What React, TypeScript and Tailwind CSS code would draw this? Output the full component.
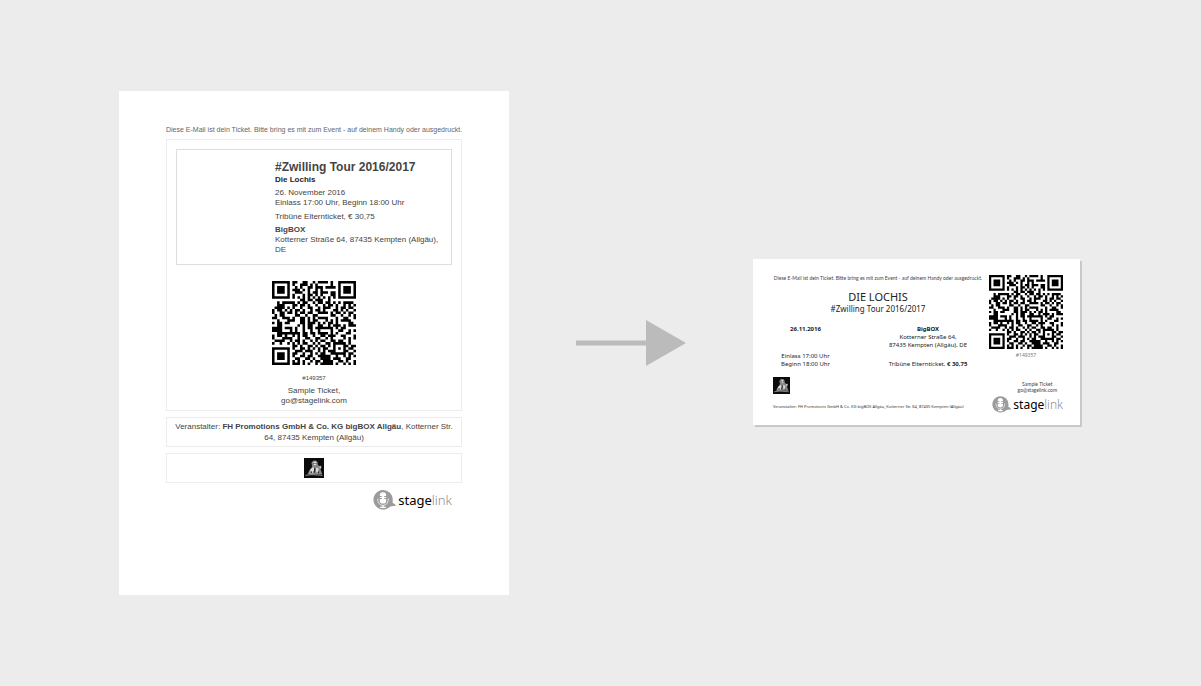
import React from "react";

const QR_ROWS = [
  "#######.##..##..#.####.#..#######",
  "#.....#.#..###.#.#.....#..#.....#",
  "#.###.#..#.#..##.###.####.#.###.#",
  "#.###.#.###.#.#..#.#......#.###.#",
  "#.###.#..###..#.##.###.##.#.###.#",
  "#.....#.#...#.##.#.#...##.#.....#",
  "#######.#.#.#.#.#.#.#.#.#.#######",
  "...........##.##.###..#..........",
  "..#.#####.#.##..#.##.##.#.#.####.",
  "..###...##.##.#..#..#.##.#..#.#.#",
  ".####.#.#..#..##..#.###..#.##.##.",
  "#.##.#.#.##.#..#.##.#...##.#.#..#",
  "#..##.##.#.##.##..####.#.##.#.##.",
  ".#.##....##..#..##.....##..#..#.#",
  "##..###.#..##.#.#.####...#..##..#",
  "..#...###..##.#.##...#.#.#.####..",
  "#.##.##....##.###.#.#.##.#....##.",
  "..##......#.#.##..##..#.###.#.###",
  "####.###.#..#.##.#######.#.##....",
  "####...#.#..#..#..#....#..##..#.#",
  "..#########.##.##.####.#.#...##..",
  "#.##.#..#.#.##..#..##.###..##...#",
  "#...####..#..##..##..#.#....#.#.#",
  ".####..#.##.#..#.#.##..##.##..#..",
  "#..#..#.#.#.##..#.#..##.#####.#..",
  "........##.#..##.#.##.#.#...##.##",
  "#######.#..##.#.#.#.##..#.#.#.##.",
  "#.....#..###.###..#.#.###...##..#",
  "#.###.#.##..#..#.#.##..######.##.",
  "#.###.#.#..##.##..#####..#..#.#.#",
  "#.###.#..##..##.#..####.###..##..",
  "#.....#.#.#.#..#.##.####..##.#..#",
  "#######.###.#.#..#.#####.#..#.#.#",
];

const QR_PATH = QR_ROWS.map((row, y) =>
  Array.from(row.matchAll(/#+/g), (run) => `M${run.index} ${y}h${run[0].length}v1h-${run[0].length}z`).join(""),
).join("");

function QrCode({ className }: { className: string }) {
  return (
    <svg viewBox="0 0 33 33" className={className} role="img" aria-label="QR code">
      <path d={QR_PATH} fill="#000" />
    </svg>
  );
}

function Portrait({ className }: { className: string }) {
  return (
    <svg viewBox="0 0 20 20" className={className} role="img" aria-label="Promoter">
      <rect width="20" height="20" fill="#0b0b0b" />
      <path d="M7.800 4C9 2 12.500 1.800 13.500 4l.4 2.600 1.400 1.600 1.800-.6.4 2.200-1 1.600 1.800 4.800H3.600l1.800-4 2.200-2.400.6-2.400-.8-1.600Z" fill="#858585" />
      <path d="M9 4.600 11 3.400l1.700.9-.6 2.400-1.800.7ZM6.600 11l2.900-2 1 2.600-2.200 4H5.400ZM12 9.400l2.400 1 .3 4.400-2.600-.6ZM15.300 8.600l1.400-.4.2 1.600-1 .8Z" fill="#dcdcdc" />
      <path d="M9.300 5.200h1.300v.9H9.300ZM11.400 5h1.100v.8h-1.100ZM10.400 9.500l1.100 1.200-.8 4.200-1-.7ZM6.800 13l1.300.7-.5 1.600H6.400ZM14 12l1.200 3h-1.400Z" fill="#222" />
      <path d="M1.500 17.300 8 16.600l10.500.7" stroke="#b5b5b5" strokeWidth=".8" fill="none" />
    </svg>
  );
}

function Stagelink({ small = false }: { small?: boolean }) {
  return (
    <div className="flex items-center gap-px">
      <svg viewBox="0 0 24 20" className={small ? "h-[17px] w-5" : "h-5 w-6"} aria-hidden="true">
        <path d="M10 0a9.8 9.8 0 0 1 9.8 9.8c0 1 0 1.900-.4 2.700l4.100 3.100-6.100.9A9.800 9.800 0 1 1 10 0Z" fill="#9b9b9b" />
        <path d="M6.800 5.400a3.200 3.200 0 0 1 6.400 0v.6h-2v.9h2v1.200h-2V9h2v1.400a3.200 3.200 0 0 1-6.400 0V9h2v-.9h-2V6.900h2V6h-2Z" fill="#fff" />
        <path d="M4.800 8.600v1.600a5.200 5.200 0 0 0 10.400 0V8.600" stroke="#e4e4e4" strokeWidth="1" fill="none" />
        <path d="M10 15.200v2M7.200 17.300h5.600" stroke="#fff" strokeWidth="1.300" fill="none" />
      </svg>
      <span
        className={
          small
            ? "font-['Noto_Sans',sans-serif] text-[12px] leading-4 text-black"
            : "font-['Noto_Sans',sans-serif] text-[13px] leading-5 text-black"
        }
      >
        stage<span className="font-light text-[#8c8c8c]">link</span>
      </span>
    </div>
  );
}

function MailTicket() {
  return (
    <article className="flex min-h-[504px] w-[390px] shrink-0 flex-col bg-white px-[47px] pt-[34px] font-['Liberation_Sans',Arial,sans-serif] text-[8px] leading-[10px] text-[#444]">
      <p className="text-center text-[7px] whitespace-nowrap text-[#666]">
        Diese E-Mail ist dein Ticket. Bitte bring es mit zum Event - auf deinem Handy oder ausgedruckt.
      </p>
      <section className="mt-1 border border-[#ececec] px-[9px] pt-[9px] pb-1">
        <div className="border border-[#dedede] py-[9px] pr-3 pl-[98px]">
          <h1 className="text-[12px] leading-4 font-bold">#Zwilling Tour 2016/2017</h1>
          <p className="font-bold text-[#222]">Die Lochis</p>
          <p className="mt-[3px]">
            26. November 2016
            <br />
            Einlass 17:00 Uhr, Beginn 18:00 Uhr
          </p>
          <p className="mt-1">Tribüne Elternticket, € 30,75</p>
          <p className="mt-[3px]">
            <strong>BigBOX</strong>
            <br />
            Kotterner Straße 64, 87435 Kempten (Allgäu), DE
          </p>
        </div>
        <div className="mt-4 flex flex-col items-center text-center">
          <QrCode className="size-[84px]" />
          <p className="mt-2 text-[6px]">#149357</p>
          <p className="mt-[3px]">
            Sample Ticket,
            <br />
            go@stagelink.com
          </p>
        </div>
      </section>
      <section className="mt-1.5 border border-[#ececec] px-2 py-[3px] text-center leading-[11px]">
        Veranstalter: <strong>FH Promotions GmbH &amp; Co. KG bigBOX Allgäu</strong>, Kotterner Str. 64, 87435 Kempten
        (Allgäu)
      </section>
      <section className="mt-1.5 flex justify-center border border-[#ececec] py-1">
        <Portrait className="size-5" />
      </section>
      <div className="mt-[7px] flex justify-end pr-2.5">
        <Stagelink />
      </div>
    </article>
  );
}

function Arrow() {
  return (
    <svg viewBox="0 0 110 46" className="h-[46px] w-[110px] shrink-0" aria-hidden="true">
      <path d="M0 20.500h70V0l40 23-40 23V25.500H0Z" fill="#bbb" />
    </svg>
  );
}

function WalletTicket() {
  return (
    <article className="mb-0.5 flex min-h-[166px] w-[327px] shrink-0 justify-between bg-white pt-4 pr-[17px] pb-3 pl-5 font-['Noto_Sans',sans-serif] text-[6px] leading-2 text-[#222] shadow-[2px_2px_0_#c8c8c8]">
      <div className="flex w-[210px] flex-col">
        <p className="text-center font-['Lato',sans-serif] text-[5px] leading-[6px] whitespace-nowrap text-[#444]">
          Diese E-Mail ist dein Ticket. Bitte bring es mit zum Event - auf deinem Handy oder ausgedruckt.
        </p>
        <h2 className="mt-2 text-center text-[11px] leading-4">DIE LOCHIS</h2>
        <p className="text-center text-[8px] leading-2">#Zwilling Tour 2016/2017</p>
        <div className="mt-3 flex justify-between text-center">
          <div className="flex w-[65px] flex-col justify-between">
            <strong>26.11.2016</strong>
            <p>
              Einlass 17:00 Uhr
              <br />
              Beginn 18:00 Uhr
            </p>
          </div>
          <div className="w-[110px]">
            <strong>BigBOX</strong>
            <p>
              Kotterner Straße 64,
              <br />
              87435 Kempten (Allgäu), DE
            </p>
            <p className="mt-[11px]">
              Tribüne Elternticket, <strong>€ 30,75</strong>
            </p>
          </div>
        </div>
        <Portrait className="mt-[9px] size-[17px]" />
        <p className="mt-[9px] text-[4px] whitespace-nowrap text-[#333]">
          Veranstalter: FH Promotions GmbH &amp; Co. KG bigBOX Allgäu, Kotterner Str. 64, 87435 Kempten (Allgäu)
        </p>
      </div>
      <div className="flex w-[74px] flex-col items-center text-center text-[5px] leading-[6px]">
        <QrCode className="size-[74px]" />
        <p className="mt-[3px] text-[#777]">#149357</p>
        <p className="mt-[23px] self-end pr-1.5 font-['Lato',sans-serif] text-[#444]">
          Sample Ticket
          <br />
          go@stagelink.com
        </p>
        <div className="mt-[3px] self-end">
          <Stagelink small />
        </div>
      </div>
    </article>
  );
}

export default function App() {
  return (
    <main className="flex min-h-screen items-center justify-center gap-[67px] bg-[#ececec] pr-0.5">
      <MailTicket />
      <Arrow />
      <WalletTicket />
    </main>
  );
}
